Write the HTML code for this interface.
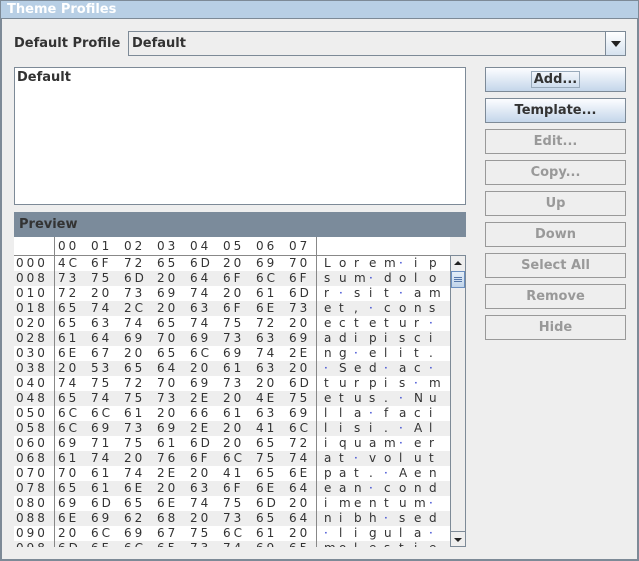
<!DOCTYPE html>
<html><head><meta charset="utf-8"><style>
*{box-sizing:border-box;margin:0;padding:0}
body{width:639px;height:561px;background:#eeeeee;font-family:"DejaVu Sans","Liberation Sans",sans-serif;font-size:12px;color:#333;position:relative;overflow:hidden}
.frame{position:absolute;left:0;top:0;width:639px;height:561px;border:2px solid #7d8a97;border-top:1px solid #7d8a97}
.title{position:absolute;left:0;top:0;width:639px;height:19px;background:#b8cfe5;border:1px solid #7d8a97;color:#fff;font-weight:bold;font-size:13px;padding-left:6px;line-height:18px}
.abs{position:absolute}
.lbl{left:14px;top:36px;font-weight:bold;font-size:13px}
.combo{left:128px;top:31px;width:498px;height:25px;border:1px solid #7d8a97;background:#eeeeee;font-weight:bold;font-size:13px;padding-left:3px;line-height:24px}
.arrow{position:absolute;right:0;top:0;width:20px;height:23px;border-left:1px solid #7d8a97;background:linear-gradient(#fff,#d6e2ef)}
.arrow:after{content:"";position:absolute;left:5px;top:9px;border-left:5px solid transparent;border-right:5px solid transparent;border-top:6px solid #222}
.list{left:14px;top:67px;width:452px;height:138px;background:#fff;border:1px solid #7d8a97;font-weight:bold;font-size:13px;padding:2px 2px}
.ph{left:14px;top:212px;width:452px;height:25px;background:#7b8b9b;font-weight:bold;font-size:13px;color:#333;padding-left:5px;line-height:26px}
.tbl{left:14px;top:237px;width:436px;height:310px;background:#fff;overflow:hidden}
.row{position:absolute;left:0;width:436px;height:15px;font-size:12px;line-height:15px;letter-spacing:3px;color:#333}
.row.g{background:#eeeeee}
.row span{position:absolute;top:0}
.vl{position:absolute;top:0;width:1px;height:310px;background:#888}
.hl{position:absolute;left:0;top:18px;width:436px;height:1px;background:#888}
.d{color:#2233cc}
.sb{left:450px;top:255px;width:16px;height:292px;background:#eeeeee;border:1px solid #7d8a97}
.sbb{position:absolute;left:0;width:14px;height:15px;background:#eeeeee}
.thumb{position:absolute;left:0;top:15px;width:14px;height:17px;background:linear-gradient(#e4eef8,#c0d4ea);border:1px solid #6b8fc0}
.btn{position:absolute;left:485px;width:141px;height:25px;border:1px solid #999;font-weight:bold;font-size:13px;text-align:center;line-height:24px;color:#999}
.btn.on{border-color:#7d8a97;background:linear-gradient(#fcfdff,#c4d6ea);color:#333}
</style></head><body>
<div class="frame"></div>
<div class="title">Theme Profiles</div>
<div class="abs lbl">Default Profile</div>
<div class="abs combo">Default<div class="arrow"></div></div>
<div class="abs list">Default</div>
<div class="abs ph">Preview</div>
<div class="abs tbl" id="t">
<div class="row" style="top:0;height:18px;line-height:18px;background:#fff"><span style="left:44px">00</span><span style="left:77px">01</span><span style="left:110px">02</span><span style="left:143px">03</span><span style="left:176px">04</span><span style="left:209px">05</span><span style="left:242px">06</span><span style="left:275px">07</span></div>
</div>
<div class="abs sb"><div class="sbb" style="top:0"><svg width="14" height="15"><path d="M3 9 L7 5 L11 9Z" fill="#222"/></svg></div><div class="thumb"><svg width="12" height="15"><path d="M2 5.5H10M2 7.5H10M2 9.5H10" stroke="#5577aa" stroke-width="1"/></svg></div><div class="sbb" style="top:275px;border-top:1px solid #7d8a97"><svg width="14" height="15"><path d="M3 6 L7 10 L11 6Z" fill="#222"/></svg></div></div>
<div class="btn on" style="top:67px"><span style="border:1px solid #9ab;padding:0 2px">Add...</span></div>
<div class="btn on" style="top:98px">Template...</div>
<div class="btn" style="top:129px">Edit...</div>
<div class="btn" style="top:160px">Copy...</div>
<div class="btn" style="top:191px">Up</div>
<div class="btn" style="top:222px">Down</div>
<div class="btn" style="top:253px">Select All</div>
<div class="btn" style="top:284px">Remove</div>
<div class="btn" style="top:315px">Hide</div>
<script>
var rows=[["000","4C 6F 72 65 6D 20 69 70"],["008","73 75 6D 20 64 6F 6C 6F"],["010","72 20 73 69 74 20 61 6D"],["018","65 74 2C 20 63 6F 6E 73"],["020","65 63 74 65 74 75 72 20"],["028","61 64 69 70 69 73 63 69"],["030","6E 67 20 65 6C 69 74 2E"],["038","20 53 65 64 20 61 63 20"],["040","74 75 72 70 69 73 20 6D"],["048","65 74 75 73 2E 20 4E 75"],["050","6C 6C 61 20 66 61 63 69"],["058","6C 69 73 69 2E 20 41 6C"],["060","69 71 75 61 6D 20 65 72"],["068","61 74 20 76 6F 6C 75 74"],["070","70 61 74 2E 20 41 65 6E"],["078","65 61 6E 20 63 6F 6E 64"],["080","69 6D 65 6E 74 75 6D 20"],["088","6E 69 62 68 20 73 65 64"],["090","20 6C 69 67 75 6C 61 20"],["098","6D 6F 6C 65 73 74 69 65"]];
var t=document.getElementById('t'),h='';
rows.forEach(function(r,i){var hx=r[1].split(' ');h+='<div class="row'+(i%2?' g':'')+'" style="top:'+(19+i*15)+'px"><span style="left:2px">'+r[0]+'</span>';
hx.forEach(function(x,j){h+='<span style="left:'+(44+j*33)+'px">'+x+'</span>';});
hx.forEach(function(x,j){var c=String.fromCharCode(parseInt(x,16));h+='<span style="left:'+(310+j*15)+'px;letter-spacing:0">'+(c==' '?'<b class="d" style="font-weight:normal">·</b>':c)+'</span>';});
h+='</div>';});
h+='<div class="hl"></div><div class="vl" style="left:40px"></div><div class="vl" style="left:302px"></div>';
t.innerHTML+=h;
</script>
</body></html>
